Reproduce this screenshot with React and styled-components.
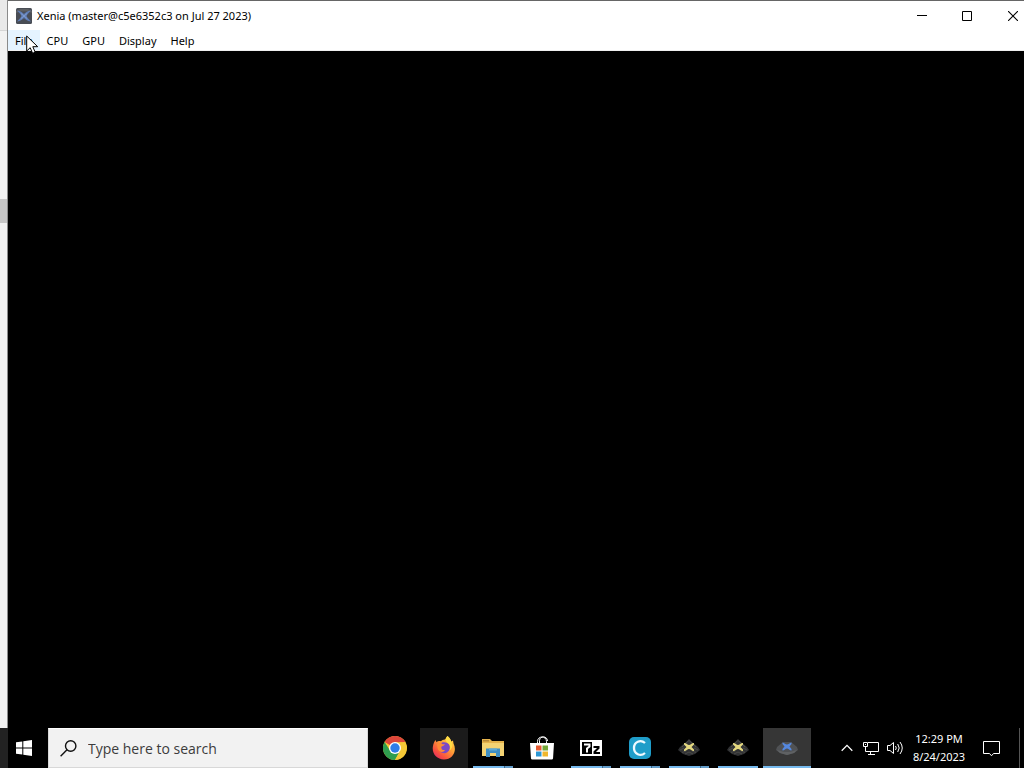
import React from 'react';
import styled, {createGlobalStyle} from 'styled-components';

const menuItems = ['File', 'CPU', 'GPU', 'Display', 'Help'];

const apps = [
    {name: 'Google Chrome', icon: ChromeIcon},
    {name: 'Firefox', icon: FirefoxIcon, hovered: true},
    {name: 'File Explorer', icon: ExplorerIcon, running: true, stacked: true},
    {name: 'Microsoft Store', icon: StoreIcon},
    {name: '7-Zip', icon: SevenZipIcon, running: true, stacked: true},
    {name: 'Cemu', icon: CemuIcon, running: true, stacked: true},
    {name: 'Xenia Manager', icon: XeniaYellowIcon, running: true, stacked: true},
    {name: 'Xenia Canary', icon: XeniaYellowIcon, running: true},
    {name: 'Xenia', icon: XeniaBlueIcon, running: true, active: true},
];

export default function App() {
    return (
        <Screen>
            <GlobalStyle/>
            <Desktop>
                <BackWindow>
                    <BackHeader/>
                    <BackBody/>
                    <BackThumb/>
                    <BackFill/>
                </BackWindow>

                <Window>
                    <TitleBar>
                        <XeniaLogo/>
                        <Title>Xenia (master@c5e6352c3 on Jul 27 2023)</Title>
                        <WindowButton aria-label="Minimize"><MinimizeIcon/></WindowButton>
                        <WindowButton aria-label="Maximize"><MaximizeIcon/></WindowButton>
                        <WindowButton aria-label="Close" $last><CloseIcon/></WindowButton>
                    </TitleBar>
                    <MenuBar>
                        {menuItems.map((item, key) =>
                            <MenuItem key={item} $hovered={key === 0}>{item}</MenuItem>
                        )}
                    </MenuBar>
                    <Viewport/>
                </Window>
                <Pointer/>
            </Desktop>

            <Taskbar>
                <StartButton aria-label="Start"><WindowsIcon/></StartButton>
                <SearchBox>
                    <SearchIcon/>
                    <SearchInput type="text" aria-label="Search" placeholder="Type here to search"/>
                </SearchBox>
                <AppList>
                    {apps.map(({name, icon: Icon, hovered, running, stacked, active}) =>
                        <AppButton key={name} aria-label={name} $hovered={hovered} $active={active}>
                            <Icon/>
                            {running && <Underline $full={active} $stacked={stacked}/>}
                        </AppButton>
                    )}
                </AppList>
                <Tray>
                    <TrayButton aria-label="Show hidden icons"><ChevronIcon/></TrayButton>
                    <TrayButton aria-label="Network"><NetworkIcon/></TrayButton>
                    <TrayButton aria-label="Volume"><VolumeIcon/></TrayButton>
                    <Clock>
                        <span>12:29 PM</span>
                        <span>8/24/2023</span>
                    </Clock>
                    <ActionButton aria-label="Notifications"><NotificationIcon/></ActionButton>
                    <ShowDesktop aria-label="Show desktop"/>
                </Tray>
            </Taskbar>
        </Screen>
    )
}

// icons
function XeniaLogo() {
    return (
        <svg width="16" height="16" viewBox="0 0 16 16">
            <rect width="16" height="16" rx="1.500" fill="#494d55"/>
            <path d="M0 3L4 1H12L16 3V5L12 3.500H4L0 5Z" fill="#5c5f63"/>
            <path d="M1 2.500C5 3 6.500 5 8 6C9.500 5 11 3 15 2.500C13 4.500 11.500 6 10.500 8C11.500 10 13 11.500 15 13.500C11 13 9.500 11 8 10C6.500 11 5 13 1 13.500C3 11.500 4.500 10 5.500 8C4.500 6 3 4.500 1 2.500Z" fill="#5f7db5"/>
            <path d="M5 5.500L8 8L11 5.500M5 10.500L8 8L11 10.500" fill="none" stroke="#7f9ccf"/>
        </svg>
    )
}

function MinimizeIcon() {
    return <svg width="10" height="10" viewBox="0 0 10 10"><path d="M0 4.500H10" stroke="#000"/></svg>
}

function MaximizeIcon() {
    return <svg width="10" height="10" viewBox="0 0 10 10"><path d="M.5 .5H9.500V9.500H.5Z" fill="none" stroke="#000"/></svg>
}

function CloseIcon() {
    return <svg width="10" height="10" viewBox="0 0 10 10"><path d="M0 0L10 10M10 0L0 10" stroke="#000" strokeWidth="1.100"/></svg>
}

function Pointer() {
    return (
        <PointerSvg width="13" height="20" viewBox="0 0 13 20">
            <path d="M.7 1V16L4.200 12.700L6.600 18.300L9.200 17.200L6.800 11.700H11.700Z" fill="#fff" stroke="#000"/>
        </PointerSvg>
    )
}

function WindowsIcon() {
    return (
        <svg width="16" height="16" viewBox="0 0 16 16" fill="#fff">
            <path d="M0 2.300L6.300 1.400V7.500H0ZM7.300 1.300L16 0V7.500H7.300ZM0 8.500H6.300V14.600L0 13.700ZM7.300 8.500H16V16L7.300 14.700Z"/>
        </svg>
    )
}

function SearchIcon() {
    return (
        <svg width="17" height="17" viewBox="0 0 17 17" fill="none" stroke="#111" strokeWidth="1.400">
            <circle cx="10.700" cy="6" r="5.200"/>
            <path d="M7 9.800L.6 16.200"/>
        </svg>
    )
}

function ChromeIcon() {
    return (
        <svg width="24" height="24" viewBox="0 0 24 24">
            <circle cx="12" cy="12" r="12" fill="#f5c836"/>
            <path d="M12 12L1.600 6A12 12 0 0 1 22.400 6L12 6.500Z" fill="#dd463a"/>
            <path d="M1.600 6A12 12 0 0 0 12 24L17 15L12 12L7 14.500Z" fill="#2f9e4f"/>
            <path d="M12 6.500H22.400A12 12 0 0 1 12 24L17 15Z" fill="#f5c836"/>
            <circle cx="12" cy="12" r="6" fill="#fff"/>
            <circle cx="12" cy="12" r="4.700" fill="#2f7de8"/>
        </svg>
    )
}

function FirefoxIcon() {
    return (
        <svg width="24" height="24" viewBox="0 0 24 24">
            <defs>
                <linearGradient id="fox" x1="1" y1="0" x2="0.200" y2="1">
                    <stop offset="0" stopColor="#ffe14a"/>
                    <stop offset="0.450" stopColor="#ffa136"/>
                    <stop offset="0.800" stopColor="#f8503f"/>
                    <stop offset="1" stopColor="#e22e63"/>
                </linearGradient>
            </defs>
            <path d="M15.500 0C18 2 19 4 19.200 5.500L21 4.500L21.500 7.500C25.500 15 20.500 23.500 12 23.500C4.500 23.500-.5 17.500 1 10C1.400 7.500 2.300 5.500 3.500 4L4.500 6.200C6 5 7.500 5 9 5.200C10 4 11.500 3.300 13 3.400Z" fill="url(#fox)"/>
            <path d="M8 8C10 5.500 15 6 17 8.500C19 12 17 16.500 13 17.200C9 17.500 7 15 7 12Z" fill="#7a48c6"/>
            <path d="M5 8C7.500 6.500 9.500 7 10.500 8.300H13C12.500 9.500 10.500 10 9.300 10.700C9 13 10.500 14.500 13 14C11.500 17 6.500 16.500 5.500 12Z" fill="#ff8a35"/>
            <path d="M15.500 0C12.500 3 13.500 5.500 16.500 7.500C18.500 9.500 18.500 12 17.500 14.500C20.500 12.500 21.500 8 19.200 5.500C18.500 3.500 17.500 1.500 15.500 0Z" fill="#ffdc45"/>
        </svg>
    )
}

function ExplorerIcon() {
    return (
        <svg width="22" height="20" viewBox="0 0 22 20">
            <path d="M0 1H8L10 3H22V18H0Z" fill="#e5b34c"/>
            <path d="M1 2H7V3.500H1Z" fill="#b78838"/>
            <path d="M0 5H22V18H0Z" fill="#f4d373"/>
            <path d="M4 10.500H18V19H14V15H8V19H4Z" fill="#3f8fc4"/>
            <path d="M7 10.500H15V12.500H7Z" fill="#5faad6"/>
        </svg>
    )
}

function StoreIcon() {
    return (
        <svg width="24" height="24" viewBox="0 0 24 24">
            <path d="M7.500 7V5.500C7.500-.5 16.500-.5 16.500 5.500V7M9.500 7V4.500C10-.8 17.500 0 17.500 5" fill="none" stroke="#fff"/>
            <path d="M0 7H24L23 22.500Q22.800 23.500 21.800 23.500H2.200Q1.200 23.500 1 22.500Z" fill="#fff"/>
            <path d="M6 9.500H11.500V14.500H6Z" fill="#e65b33"/>
            <path d="M12.500 9.500H18V14.500H12.500Z" fill="#75a83a"/>
            <path d="M6 15.500H11.500V20.500H6Z" fill="#2b97d5"/>
            <path d="M12.500 15.500H18V20.500H12.500Z" fill="#f0b72d"/>
        </svg>
    )
}

function SevenZipIcon() {
    return (
        <svg width="22" height="16" viewBox="0 0 22 16">
            <path d="M0 0H22V16H0Z" fill="#fff"/>
            <path d="M2 2H12V14H2Z" fill="#000"/>
            <path d="M4 4.500H9.500V6.500L7 8.500V12.500" fill="none" stroke="#fff" strokeWidth="2"/>
            <path d="M13.500 7H18.500V8L14.500 12V13H20" fill="none" stroke="#000" strokeWidth="2"/>
        </svg>
    )
}

function CemuIcon() {
    return (
        <svg width="22" height="22" viewBox="0 0 22 22">
            <rect width="22" height="22" rx="5" fill="#1f9dc9"/>
            <path d="M16 6C11.500 2 5 5 5 11C5 17 11.500 20 16 16" fill="none" stroke="#effaff" strokeWidth="2.300"/>
        </svg>
    )
}

function XeniaYellowIcon() {
    return (
        <svg width="22" height="20" viewBox="0 0 22 20">
            <path d="M11 1L14 4L20 9L22 12L17 16L11 18L5 16L0 12L2 9L8 4Z" fill="#303133"/>
            <path d="M4 9L8 5L11 2.500L14 5L18 9M2 12L6 10M20 12L16 10M4 14.500L8 13M18 14.500L14 13M7 16L11 14L15 16" fill="none" stroke="#4a4a47"/>
            <path d="M6 5C8.500 5 9.500 7 11 7C12.500 7 13.500 5 16 5V6.500L13.500 9L16 11.500V13C13.500 13 12.500 11 11 11C9.500 11 8.500 13 6 13V11.500L8.500 9L6 6.500Z" fill="#e4d880"/>
        </svg>
    )
}

function XeniaBlueIcon() {
    return (
        <svg width="22" height="20" viewBox="0 0 22 20">
            <path d="M7 4L15 4L21 9L22 12L18 15L11 17L4 15L0 12L1 9Z" fill="#505255"/>
            <path d="M1 12L8 14H14L21 12L18 15L11 17L4 15Z" fill="#5f6163"/>
            <path d="M6.500 4.500C8.500 5 9.500 6.500 11 6.500C12.500 6.500 13.500 5 15.500 4.500V6L13.500 8.500L15.500 11V12.500C13.500 12.500 12.500 10.500 11 10.500C9.500 10.500 8.500 12.500 6.500 12.500V11L8.500 8.500L6.500 6Z" fill="#5588df"/>
        </svg>
    )
}

function ChevronIcon() {
    return <svg width="12" height="8" viewBox="0 0 12 8"><path d="M.7 6.700L6 1.400L11.300 6.700" fill="none" stroke="#fff" strokeWidth="1.300"/></svg>
}

function NetworkIcon() {
    return (
        <svg width="16" height="14" viewBox="0 0 16 14" fill="none" stroke="#fff">
            <path d="M5 1.500H15.500V10.500H2.500V5.500"/>
            <path d="M.5 1.500H4.500V5.500H.5ZM2.500 3V4M7.500 10.500V13M5 13.500H12"/>
        </svg>
    )
}

function VolumeIcon() {
    return (
        <svg width="17" height="14" viewBox="0 0 17 14" fill="none" stroke="#fff">
            <path d="M.5 4.500H3L6.500 1.500V12.500L3 9.500H.5Z"/>
            <path d="M8.500 5Q10 7 8.500 9M10.700 3Q13.700 7 10.700 11M13 1Q17.500 7 13 13"/>
        </svg>
    )
}

function NotificationIcon() {
    return <svg width="17" height="17" viewBox="0 0 17 17"><path d="M.5 1.500H16.500V13.500H10.500L8.500 15.800L6.500 13.500H.5Z" fill="none" stroke="#fff"/></svg>
}

// styles
const GlobalStyle = createGlobalStyle`
    body {
        margin: 0;
        background-color: #000;
        font-family: "Noto Sans", "Open Sans", sans-serif;
    }

    * {
        box-sizing: border-box;
    }

    button {
        border: none;
        padding: 0;
        background: none;
        font-family: inherit;
    }

    svg {
        display: block;
        flex: none;
    }
`;

const Screen = styled.div`
    display: flex;
    flex-direction: column;
    min-height: 100vh;
    overflow: hidden;
`;

const Desktop = styled.div`
    position: relative;
    flex: 1;
    display: flex;
`;

const BackWindow = styled.div`
    width: 8px;
    display: flex;
    flex-direction: column;
    background-color: #f1f1f1;
    border-right: 1px solid #8a8a8a;
`;

const BackHeader = styled.div`
    height: 31px;
    background-color: #e9e9e9;
    border-bottom: 1px solid #d5d5d5;
`;

const BackBody = styled.div`
    height: 168px;
`;

const BackThumb = styled.div`
    height: 24px;
    background-color: #c6c6c6;
`;

const BackFill = styled.div`
    flex: 1;
`;

const Window = styled.main`
    flex: 1;
    display: flex;
    flex-direction: column;
    background-color: #fff;
    border-top: 1px solid #666;
`;

const TitleBar = styled.header`
    display: flex;
    align-items: center;
    height: 29px;
    padding-left: 8px;
`;

const Title = styled.h1`
    flex: 1;
    margin: 0 0 0 5px;
    color: #000;
    font-size: 11px;
    font-weight: 400;
    line-height: 16px;
`;

const WindowButton = styled.button`
    display: flex;
    align-items: center;
    justify-content: center;
    width: ${props => props.$last ? '35px' : '45px'};
    height: 28px;
    padding-left: ${props => props.$last ? '13px' : '0'};
`;

const MenuBar = styled.nav`
    display: flex;
    height: 21px;
    border-bottom: 1px solid #f0f0f0;
`;

const MenuItem = styled.button`
    padding: 1px 7px 0;
    color: #000;
    font-size: 11px;
    line-height: 20px;
    background-color: ${props => props.$hovered ? '#e5f3ff' : 'transparent'};
`;

const Viewport = styled.section`
    flex: 1;
    background-color: #000;
`;

const PointerSvg = styled.svg`
    position: absolute;
    top: 35px;
    left: 26px;
`;

const Taskbar = styled.footer`
    display: flex;
    height: 40px;
    background-color: #000;
`;

const StartButton = styled.button`
    display: flex;
    align-items: center;
    justify-content: center;
    width: 48px;
    border-left: 8px solid #222;
    padding-right: 8px;
`;

const SearchBox = styled.label`
    display: flex;
    align-items: center;
    gap: 11px;
    width: 320px;
    padding: 0 11px;
    background-color: #f2f2f2;
    border: 1px solid #d8d8d8;
    border-top-color: #fff;
`;

const SearchInput = styled.input`
    flex: 1;
    min-width: 0;
    border: none;
    outline: none;
    padding: 0;
    background: none;
    font-family: "Open Sans", sans-serif;
    font-size: 14px;

    &::placeholder {
        color: #3c3c3c;
        opacity: 1;
    }
`;

const AppList = styled.div`
    flex: 1;
    display: flex;
    gap: 1px;
    padding-left: 3px;
`;

const AppButton = styled.button`
    position: relative;
    display: flex;
    align-items: center;
    justify-content: center;
    width: 48px;
    background-color: ${props => props.$active ? '#363636' : props.$hovered ? '#1b1b1b' : 'transparent'};
`;

const Underline = styled.span`
    position: absolute;
    bottom: 0;
    left: ${props => props.$full ? '0' : '4px'};
    right: ${props => props.$full ? '0' : '4px'};
    height: 2px;
    background: ${props => props.$stacked ? 'linear-gradient(to right, #76b9ed 31px, #3c6688 31px, #3c6688 32px, #639cc9 32px)' : '#76b9ed'};
`;

const Tray = styled.div`
    display: flex;
    align-items: center;
`;

const TrayButton = styled.button`
    display: flex;
    align-items: center;
    justify-content: center;
    width: 24px;
    height: 40px;
`;

const Clock = styled.time`
    display: flex;
    flex-direction: column;
    align-items: center;
    width: 64px;
    color: #fff;
    font-size: 11px;
    line-height: 18px;
`;

const ActionButton = styled(TrayButton)`
    width: 40px;
`;

const ShowDesktop = styled.button`
    width: 5px;
    height: 40px;
    margin-left: 8px;
    border-left: 1px solid #555;
`;
